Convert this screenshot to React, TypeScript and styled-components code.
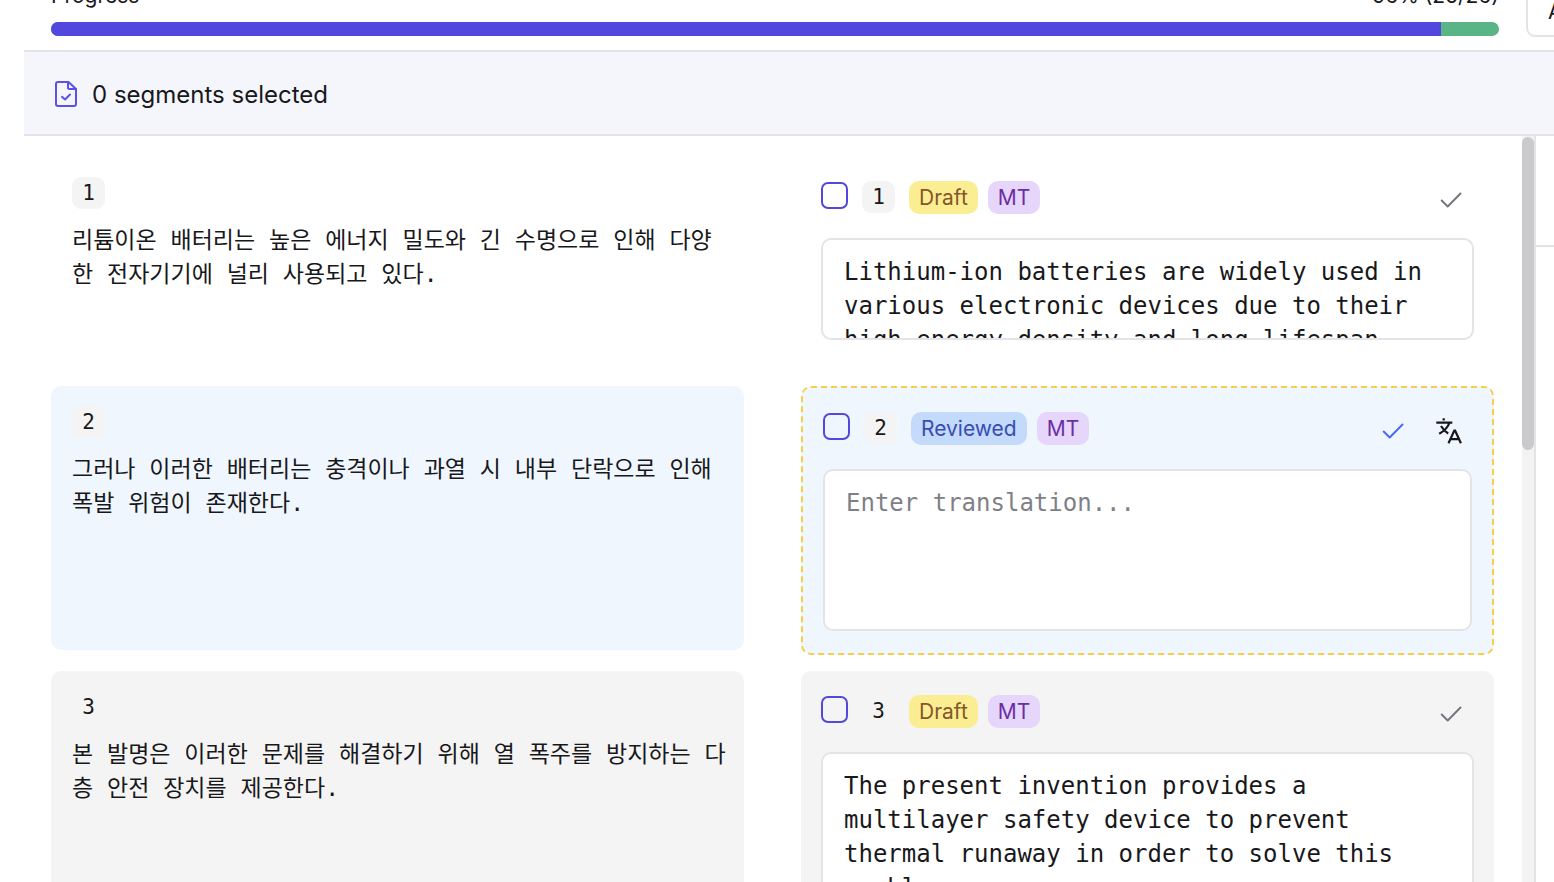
import React from "react";
import styled, { createGlobalStyle, css } from "styled-components";

const mono = `"DejaVu Sans Mono", "Noto Sans CJK KR", monospace`;

const GlobalStyle = createGlobalStyle`
  *, *::before, *::after { box-sizing: border-box; }
  html, body, #root { height: 100%; margin: 0; }
  body {
    overflow: hidden;
    background: #fff;
    color: #18181b;
    font-family: Inter, "Noto Sans CJK KR", sans-serif;
    -webkit-font-smoothing: antialiased;
  }
  button, input, textarea { font: inherit; color: inherit; margin: 0; }
`;

const Page = styled.div`
  display: flex;
  flex-direction: column;
  height: 100%;
  padding-left: 24px;
`;

const Header = styled.header`
  display: flex;
  align-items: flex-end;
  gap: 27px;
  flex: 0 0 50px;
  padding: 0 0 13px 27px;
  overflow: hidden;
`;

const Progress = styled.div`
  flex: 1;
  padding-bottom: 1px;
`;

const ProgressLabels = styled.div`
  display: flex;
  justify-content: space-between;
  margin-bottom: 12px;
  font-size: 21px;
  line-height: 28px;
`;

const ProgressTrack = styled.div`
  display: flex;
  height: 14px;
  border-radius: 7px;
  overflow: hidden;
  background: #59b585;
`;

const ProgressFill = styled.div`
  background: #5248de;
`;

const FilterSlot = styled.div`
  display: flex;
  width: 28px;
`;

const FilterButton = styled.button`
  flex: 0 0 120px;
  height: 51px;
  padding: 0 20px;
  border: 2px solid #e4e4e7;
  border-radius: 9px;
  background: #fff;
  font-size: 21px;
  text-align: left;
`;

const SelectionBar = styled.div`
  display: flex;
  align-items: center;
  gap: 14px;
  flex: 0 0 86px;
  padding: 2px 30px 0;
  border: solid #e4e4e7;
  border-width: 2px 0;
  background: #f5f6fc;
  font-size: 24px;
`;

const Workspace = styled.div`
  display: flex;
  flex: 1;
  min-height: 0;
`;

const Segments = styled.main`
  flex: 1;
  display: grid;
  grid-template-columns: 1fr 1fr;
  grid-auto-rows: max-content;
  align-content: start;
  gap: 16px 57px;
  padding: 21px 28px 0 27px;
  overflow: hidden;
`;

const ScrollTrack = styled.div`
  flex: 0 0 12px;
  padding-top: 1px;
  background: #f3f3f4;
`;

const ScrollThumb = styled.div`
  height: 42%;
  border-radius: 6px;
  background: #cacacc;
`;

const SidePanel = styled.aside`
  flex: 0 0 20px;
  border-left: 2px solid #e4e4e7;
`;

const SidePanelHead = styled.div`
  height: 111px;
  border-bottom: 2px solid #e4e4e7;
`;

type Tone = "plain" | "active" | "muted";

const tones: Record<Tone, string> = {
  plain: "#ffffff",
  active: "#eff6fe",
  muted: "#f4f4f4",
};

const Card = styled.section<{ $tone: Tone }>`
  border-radius: 10px;
  background: ${(p) => tones[p.$tone]};
`;

const SourceCard = styled(Card)`
  min-height: 208px;
  margin-bottom: 5px;
  padding: 20px 15px 20px 21px;
`;

const TargetCard = styled(Card)<{ $current?: boolean }>`
  min-height: 213px;
  padding: 20px 20px 22px;
  ${(p) =>
    p.$current &&
    css`
      border: 2px dashed #f7cf46;
    `}
`;

const SourceText = styled.p`
  margin: 14px 0 0;
  font-family: ${mono};
  font-size: 23px;
  line-height: 34px;
`;

const CardHead = styled.div`
  display: flex;
  align-items: center;
  height: 40px;
  margin-bottom: 21px;
`;

const Checkbox = styled.input`
  appearance: none;
  width: 27px;
  height: 27px;
  margin: 0 14px 3px 0;
  border: 2px solid #5248de;
  border-radius: 7px;
`;

const NumberBadge = styled.span`
  display: flex;
  align-items: center;
  justify-content: center;
  width: 33px;
  height: 32px;
  border-radius: 9px;
  background: #f4f4f4;
  font-family: ${mono};
  font-size: 21px;
  line-height: 32px;
`;

type TagKind = "draft" | "reviewed" | "mt";

const tagColors: Record<TagKind, string> = {
  draft: "background: #fbee92; color: #85562a;",
  reviewed: "background: #c3dafb; color: #3a4cb0;",
  mt: "background: #e7d6fb; color: #6b2fa5;",
};

const Tags = styled.div`
  display: flex;
  gap: 10px;
  margin-left: 14px;
`;

const Tag = styled.span<{ $kind: TagKind }>`
  padding: 0 10px;
  border-radius: 10px;
  font-size: 21px;
  line-height: 33px;
  ${(p) => tagColors[p.$kind]}
`;

const Actions = styled.div`
  display: flex;
  gap: 30px;
  margin-left: auto;
  padding: 6px 10px 0 0;
`;

const IconButton = styled.button<{ $color: string }>`
  display: flex;
  padding: 0;
  border: 0;
  background: none;
  color: ${(p) => p.$color};
`;

const Editor = styled.textarea<{ $height: number }>`
  display: block;
  width: 100%;
  height: ${(p) => p.$height}px;
  padding: 15px 20px 14px 21px;
  border: 2px solid #e4e4e7;
  border-radius: 10px;
  background: #fff;
  font-family: ${mono};
  font-size: 24px;
  line-height: 34px;
  resize: none;
  overflow: hidden;
  outline: none;
  &::placeholder { color: #7f7f88; opacity: 1; }
`;

const FileCheckIcon = () => (
  <svg width="24" height="28" viewBox="0 0 24 28" fill="none" stroke="#5a50ea" strokeWidth="2" strokeLinecap="round" strokeLinejoin="round" aria-hidden="true">
    <path d="M14.500 2H4a2 2 0 0 0-2 2v20a2 2 0 0 0 2 2h16a2 2 0 0 0 2-2V9z" />
    <path d="M14 2v5.500a1.500 1.500 0 0 0 1.500 1.500H22" />
    <path d="M8 16.800l3 2.700 5-5" />
  </svg>
);

const CheckIcon = () => (
  <svg width="26" height="26" viewBox="0 0 26 26" fill="none" stroke="currentColor" strokeWidth="2" strokeLinecap="round" strokeLinejoin="round" aria-hidden="true">
    <path d="M3.700 13.500l6 6L22.500 6.500" />
  </svg>
);

const TranslateIcon = () => (
  <svg width="26" height="26" viewBox="0 0 26 26" fill="none" stroke="currentColor" strokeWidth="2.200" aria-hidden="true">
    <path d="M7.700 0.300V2.600M0.300 4.700H16.300M13.300 5C12 9.500 8 13 3.200 15.800M5 8C6.500 10.500 9 13.500 12.200 15.500" />
    <path d="M12.500 25.200L18.300 12.500H19.100L24.900 25.200M14.500 21.200H23" />
  </svg>
);

interface Segment {
  id: number;
  source: string;
  target: string;
  status: "draft" | "reviewed";
  tone: Tone;
  height: number;
}

const segments: Segment[] = [
  {
    id: 1,
    source: "리튬이온 배터리는 높은 에너지 밀도와 긴 수명으로 인해 다양한 전자기기에 널리 사용되고 있다.",
    target: "Lithium-ion batteries are widely used in various electronic devices due to their high energy density and long lifespan.",
    status: "draft",
    tone: "plain",
    height: 102,
  },
  {
    id: 2,
    source: "그러나 이러한 배터리는 충격이나 과열 시 내부 단락으로 인해 폭발 위험이 존재한다.",
    target: "",
    status: "reviewed",
    tone: "active",
    height: 162,
  },
  {
    id: 3,
    source: "본 발명은 이러한 문제를 해결하기 위해 열 폭주를 방지하는 다층 안전 장치를 제공한다.",
    target: "The present invention provides a multilayer safety device to prevent thermal runaway in order to solve this problem.",
    status: "draft",
    tone: "muted",
    height: 162,
  },
];

const SegmentRow = ({ segment }: { segment: Segment }) => {
  const reviewed = segment.status === "reviewed";
  return (
    <>
      <SourceCard $tone={segment.tone}>
        <NumberBadge>{segment.id}</NumberBadge>
        <SourceText lang="ko">{segment.source}</SourceText>
      </SourceCard>
      <TargetCard $tone={segment.tone} $current={reviewed}>
        <CardHead>
          <Checkbox type="checkbox" aria-label={`Select segment ${segment.id}`} />
          <NumberBadge>{segment.id}</NumberBadge>
          <Tags>
            <Tag $kind={segment.status}>{reviewed ? "Reviewed" : "Draft"}</Tag>
            <Tag $kind="mt">MT</Tag>
          </Tags>
          <Actions>
            <IconButton type="button" aria-label="Mark as reviewed" $color={reviewed ? "#4a6cf0" : "#77777f"}>
              <CheckIcon />
            </IconButton>
            {reviewed && (
              <IconButton type="button" aria-label="Translate" $color="#18181b">
                <TranslateIcon />
              </IconButton>
            )}
          </Actions>
        </CardHead>
        <Editor
          $height={segment.height}
          aria-label={`Translation of segment ${segment.id}`}
          placeholder="Enter translation..."
          defaultValue={segment.target}
          spellCheck={false}
        />
      </TargetCard>
    </>
  );
};

export default function App() {
  return (
    <>
      <GlobalStyle />
      <Page>
        <Header>
          <Progress>
            <ProgressLabels>
              <span>Progress</span>
              <span>96% (25/26)</span>
            </ProgressLabels>
            <ProgressTrack>
              <ProgressFill style={{ width: "96%" }} />
            </ProgressTrack>
          </Progress>
          <FilterSlot>
            <FilterButton type="button">All</FilterButton>
          </FilterSlot>
        </Header>
        <SelectionBar>
          <FileCheckIcon />
          <span>0 segments selected</span>
        </SelectionBar>
        <Workspace>
          <Segments>
            {segments.map((segment) => (
              <SegmentRow key={segment.id} segment={segment} />
            ))}
          </Segments>
          <ScrollTrack>
            <ScrollThumb />
          </ScrollTrack>
          <SidePanel>
            <SidePanelHead />
          </SidePanel>
        </Workspace>
      </Page>
    </>
  );
}
